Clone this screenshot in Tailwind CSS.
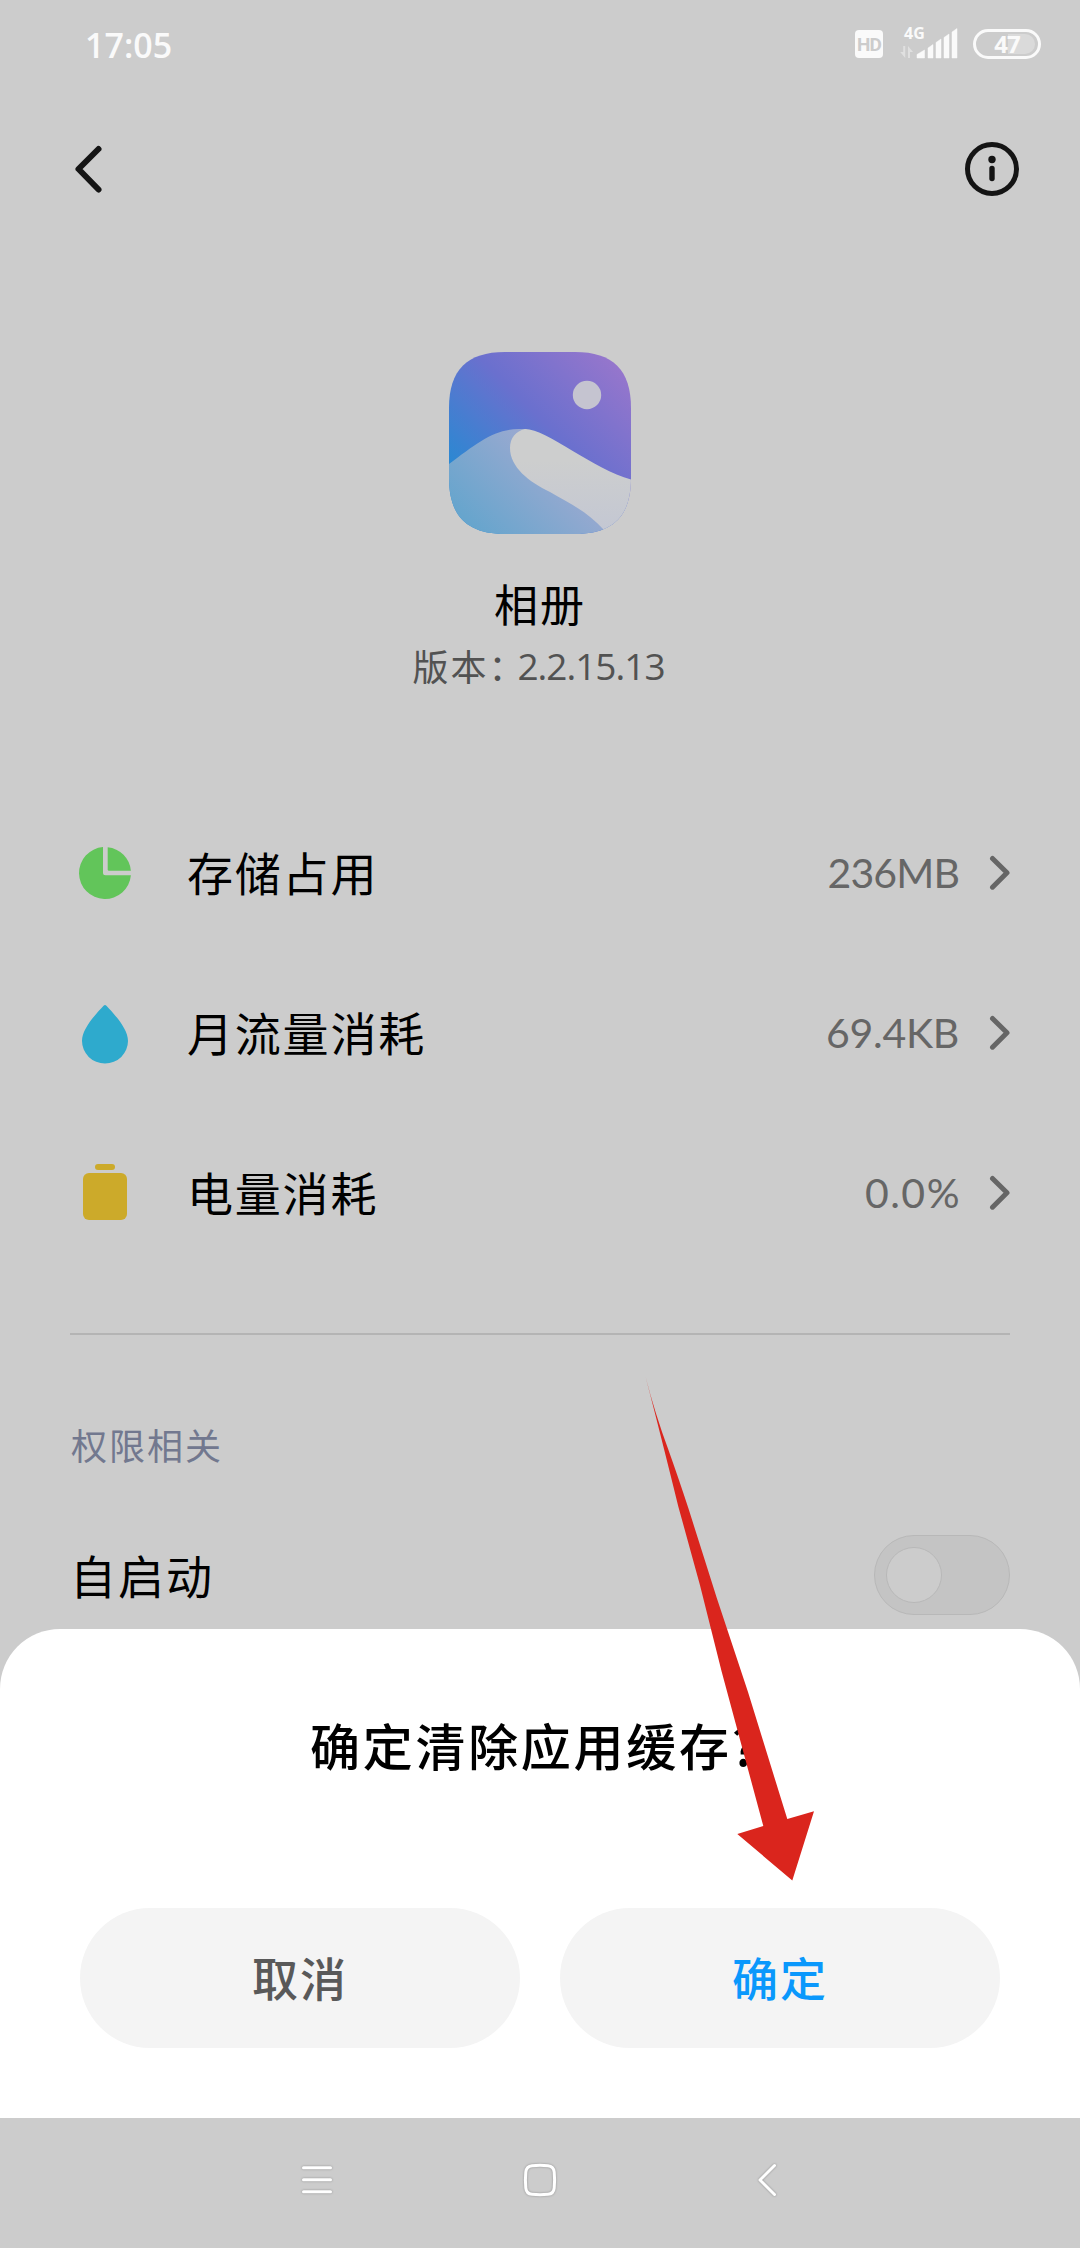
<!DOCTYPE html>
<html lang="zh-CN">
<head>
<meta charset="utf-8">
<title>应用信息</title>
<script src="https://cdn.jsdelivr.net/npm/@tailwindcss/browser@4"></script>
</head>
<body class="bg-[#cccccc]">
<div class="relative w-[1080px] h-[2248px] overflow-hidden bg-[#cccccc] font-['Noto_Sans_CJK_SC',sans-serif] text-black">

  <!-- Status bar -->
  <header class="flex h-[88px] items-center justify-between pl-[85px] pr-[39px] text-[#fafafa]">
    <div class="pt-[2px] font-['Open_Sans',sans-serif] text-[34px] font-semibold leading-none">17:05</div>
    <div class="flex h-[30px] items-center">
      <div class="flex h-7 w-7 items-center justify-center rounded-[4px] bg-[#fafafa] pt-px font-[Roboto,sans-serif] text-[19px] font-bold leading-none tracking-[-0.8px] text-[#cccccc]">HD</div>
      <svg class="ml-4 h-[48px] w-[60px]" viewBox="899 20 60 48" fill="#fafafa">
        <text x="904" y="39.300" font-family="Open Sans" font-weight="700" font-size="16">4G</text>
        <g fill="#e0e0e0"><path d="M903.200 46h2v12l-5-6h3z"/><path d="M908 58V46l5 6h-3v6z"/></g>
        <path d="M917 58v-3.500l7.500-4.500v8zM928 58V48l5-3.500V58zM936 58V42.500l5-3.500V58zM944 58V37.500l5-3.500V58zM952 58V32l5-3.500V58z" stroke="#fafafa" stroke-width=".5" stroke-linejoin="round"/>
      </svg>
      <div class="relative ml-[14px] flex h-[30px] w-[68px] items-center justify-center rounded-full border-[3px] border-[#fafafa]">
        <div class="absolute right-[3px] h-[20px] w-[27px] rounded-r-full bg-[#dadada]"></div>
        <span class="relative font-['Open_Sans',sans-serif] text-[24px] font-bold leading-none tracking-[-1px]">47</span>
      </div>
    </div>
  </header>

  <!-- Title bar -->
  <div class="flex h-[162px] items-center justify-between pl-[70px] pr-[60px]">
    <svg class="h-[56px] w-[40px]" viewBox="70 141 40 56" fill="none" stroke="#141414" stroke-width="6" stroke-linecap="round" stroke-linejoin="round"><path d="M98.500 149l-20 20 20 20.500"/></svg>
    <svg class="h-[56px] w-[56px]" viewBox="964 141 56 56"><circle cx="992" cy="169" r="24.500" fill="none" stroke="#141414" stroke-width="5"/><circle cx="992" cy="159.500" r="3.700" fill="#141414"/><path d="M992 168.500v10" stroke="#141414" stroke-width="5.400" stroke-linecap="round"/></svg>
  </div>

  <!-- App summary -->
  <section class="flex h-[543px] flex-col items-center pt-[102px]">
    <svg class="h-[182px] w-[182px]" viewBox="0 0 182 182">
      <defs>
        <linearGradient id="sky" gradientUnits="userSpaceOnUse" x1="0" y1="110" x2="135" y2="-25"><stop offset="0" stop-color="#2b88d2"/><stop offset=".5" stop-color="#6a70ce"/><stop offset="1" stop-color="#9776cc"/></linearGradient>
        <linearGradient id="hill" gradientUnits="userSpaceOnUse" x1="15" y1="165" x2="85" y2="95"><stop offset="0" stop-color="#67a5cd"/><stop offset="1" stop-color="#98a9d0"/></linearGradient>
        <linearGradient id="dune" x1="0" y1="0" x2="0" y2="1"><stop offset=".3" stop-color="#cdcece"/><stop offset="1" stop-color="#c3c7d3"/></linearGradient>
        <clipPath id="tile"><path d="M0 56C0 18 18 0 56 0H126C164 0 182 18 182 56V126C182 164 164 182 126 182H56C18 182 0 164 0 126Z"/></clipPath>
      </defs>
      <g clip-path="url(#tile)">
        <rect width="182" height="182" fill="url(#sky)"/>
        <path d="M0 112C28 91 45 77 70 77H77L182 150V182H0Z" fill="url(#hill)"/>
        <path d="M76 77C98 77 145 118 182 127.500V182H157L155 178C138 159 118 150 101 140C80 130 61 115 61 96C61 86 67 79 76 77Z" fill="url(#dune)"/>
        <circle cx="138" cy="43" r="14.200" fill="#c5c4d0"/>
      </g>
    </svg>
    <h1 class="mt-[37px] text-[44px] leading-[64px] tracking-[2px]">相册</h1>
    <p class="mt-[3px] flex h-[54px] items-center pr-[3px] text-[36px] text-[#525252]"><span class="-mr-[9px] tracking-[2px]">版本：</span><span class="pt-px font-['Open_Sans',sans-serif] text-[37px] tracking-[-1px]">2.2.15.13</span></p>
  </section>

  <!-- Usage rows -->
  <section class="flex flex-col px-[70px] text-[46px] tracking-[1.800px]">
    <div class="flex h-40 items-center">
      <svg class="h-[70px] w-[70px]" viewBox="70 838 70 70" fill="#62c55a"><path d="M103 847.080A26 26 0 1 0 130.900 875.300H105.500Q103 875.300 103 872.800Z"/><path d="M107.700 847.140A26 26 0 0 1 130.900 870.700H109Q107.700 870.700 107.700 869.400Z"/></svg>
      <span class="ml-[47px] pb-[3px]">存储占用</span>
      <span class="ml-auto font-[Lato,sans-serif] text-[41px] tracking-[-0.9px] text-[#666666]">236MB</span>
      <svg class="ml-[29px] h-[40px] w-[22px]" viewBox="988 853 22 40" fill="none" stroke="#666666" stroke-width="5" stroke-linecap="round" stroke-linejoin="round"><path d="M992.500 858.500L1007 872.800L992.500 887.200"/></svg>
    </div>
    <div class="flex h-40 items-center">
      <svg class="h-[70px] w-[70px]" viewBox="70 998 70 70" fill="#2eaacd"><path d="M103.600 1005.800Q105 1004.400 106.400 1005.800C113 1013 128 1028 128 1041A23 22.500 0 0 1 82 1041C82 1028 97 1013 103.600 1005.800Z"/></svg>
      <span class="ml-[47px] pb-[3px]">月流量消耗</span>
      <span class="ml-auto font-[Lato,sans-serif] text-[41px] tracking-[-0.3px] text-[#666666]">69.4KB</span>
      <svg class="ml-[29px] h-[40px] w-[22px]" viewBox="988 853 22 40" fill="none" stroke="#666666" stroke-width="5" stroke-linecap="round" stroke-linejoin="round"><path d="M992.500 858.500L1007 872.800L992.500 887.200"/></svg>
    </div>
    <div class="flex h-40 items-center">
      <svg class="h-[70px] w-[70px]" viewBox="70 1158 70 70" fill="#ccaa2a"><rect x="95" y="1164" width="20" height="6" rx="3"/><rect x="83" y="1173" width="44" height="47" rx="6"/></svg>
      <span class="ml-[47px] pb-[3px]">电量消耗</span>
      <span class="ml-auto font-[Lato,sans-serif] text-[41px] tracking-[1.500px] text-[#666666]">0.0%</span>
      <svg class="ml-[27px] h-[40px] w-[22px]" viewBox="988 853 22 40" fill="none" stroke="#666666" stroke-width="5" stroke-linecap="round" stroke-linejoin="round"><path d="M992.500 858.500L1007 872.800L992.500 887.200"/></svg>
    </div>
  </section>

  <!-- Permissions -->
  <section class="mx-[70px] mt-[60px] border-t-2 border-[#b4b4b4] pt-[81px]">
    <h2 class="pl-px text-[36px] leading-[56px] tracking-[2px] text-[#72788f]">权限相关</h2>
    <div class="mt-[57px] flex h-[92px] items-center justify-between">
      <span class="pb-[2px] text-[46px] tracking-[2px]">自启动</span>
      <div class="flex h-[80px] w-[136px] items-center rounded-full border border-[#b8b8b8] bg-[#c4c4c4] pl-[11px]">
        <div class="h-[56px] w-[56px] rounded-full border border-[#b8b8b8] bg-[#cccccc]"></div>
      </div>
    </div>
  </section>

  <!-- Confirmation sheet -->
  <div class="absolute inset-x-0 bottom-[130px] flex h-[489px] flex-col items-center rounded-t-[60px] bg-white px-20 pt-[75px]">
    <h3 class="pr-[11px] text-[50px] font-medium leading-[80px] tracking-[2.700px]">确定清除应用缓存?</h3>
    <div class="mt-[124px] flex w-full gap-10 text-[46px] font-medium tracking-[2px]">
      <button class="h-[140px] flex-1 rounded-full bg-[#f4f4f4] pb-[3px] text-[#595959]">取消</button>
      <button class="h-[140px] flex-1 rounded-full bg-[#f4f4f4] pb-[3px] text-[#0a98fc]">确定</button>
    </div>
  </div>

  <!-- System navigation -->
  <nav class="absolute inset-x-0 bottom-0 flex h-[130px] items-center bg-[#cccccc] pl-[297px]">
    <svg class="mb-[6px] h-[40px] w-[484px] drop-shadow-[0_0_1px_rgba(0,0,0,0.3)]" viewBox="297 2160 484 40" fill="none" stroke="#ffffff" stroke-width="3" stroke-linecap="round" stroke-linejoin="round">
      <path d="M303.500 2167.700h27M303.500 2179.700h27M303.500 2191.700h27"/>
      <path d="M532 2165.700Q540 2165 548 2165.700Q553.600 2166.200 554.200 2172Q555 2180 554.200 2188Q553.600 2193.800 548 2194.300Q540 2195 532 2194.300Q526.400 2193.800 525.800 2188Q525 2180 525.800 2172Q526.400 2166.200 532 2165.700Z"/>
      <path d="M774.500 2165.500L760 2180L774.500 2194.500"/>
    </svg>
  </nav>

  <!-- Pointer arrow -->
  <svg class="pointer-events-none absolute left-[640px] top-[1370px] h-[520px] w-[180px]" viewBox="640 1370 180 520" fill="#da251d">
    <path d="M645.500 1376.500Q655 1413.700 668.300 1449.600Q678 1476.800 688.300 1508.100Q702 1551.200 716.700 1597.700L748 1692L787.300 1819.100L814 1811.200L792.300 1880.500L737.300 1834L763.300 1826L721.700 1671.700L700 1585.300L678.300 1506.400Q660 1432.300 645.500 1376.500Z"/>
  </svg>
</div>
</body>
</html>
